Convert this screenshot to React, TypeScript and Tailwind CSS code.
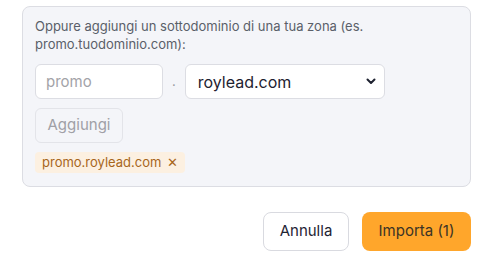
export default function App() {
    return (
        <div className="min-h-[272px] bg-white pt-[6px] pl-[22px]" style={{ fontFamily: 'Inter, "Noto Sans", sans-serif' }}>
            <div className="w-[449px] rounded-lg border border-[#dcdde3] bg-[#f4f5f9] px-[12px] pt-[10px] pb-[13px]">
                <p className="text-[13px] leading-[18px] text-[#5a5f69]">
                    Oppure aggiungi un sottodominio di una tua zona (es. promo.tuodominio.com):
                </p>
                <div className="mt-[11px] flex items-center">
                    <input
                        placeholder="promo"
                        className="h-[35px] w-[128px] rounded-md border border-[#dcdde3] bg-white px-[10px] text-[15px] text-[#222] placeholder:text-[#a3a3a8] outline-none"
                    />
                    <span className="mx-[9px] text-[13px] text-[#9a9aa0]">.</span>
                    <div className="relative">
                        <select className="h-[35px] w-[200px] appearance-none rounded-md border border-[#dcdde3] bg-white pl-[12px] text-[16px] text-[#1e2230] outline-none">
                            <option>roylead.com</option>
                        </select>
                        <svg className="pointer-events-none absolute right-[9px] top-[14px]" width="10" height="7" viewBox="0 0 10 7">
                            <path d="M1.5 1.5 L5 5 L8.5 1.5" fill="none" stroke="#1e2230" strokeWidth="2" strokeLinecap="round" strokeLinejoin="round" />
                        </svg>
                    </div>
                </div>
                <button className="mt-[9px] h-[35px] w-[88px] rounded-md border border-[#e3e4e9] text-[15px] text-[#a0a0a6]">
                    Aggiungi
                </button>
                <div className="mt-[9px] flex">
                    <span className="flex h-[21px] items-center gap-[6px] rounded-sm bg-[#fcf0e1] px-[7px] text-[13px] text-[#a7661c]">
                        promo.roylead.com <span className="text-[13px]">✕</span>
                    </span>
                </div>
            </div>
            <div className="mt-[25px] flex w-[449px] justify-end gap-[13px]">
                <button className="h-[39px] w-[86px] rounded-lg border border-[#d9dae0] bg-white text-[15px] text-[#1f2433]">
                    Annulla
                </button>
                <button className="h-[39px] w-[109px] rounded-lg bg-[#ffa62b] text-[15px] text-[#3b3426]">
                    Importa (1)
                </button>
            </div>
        </div>
    )
}
